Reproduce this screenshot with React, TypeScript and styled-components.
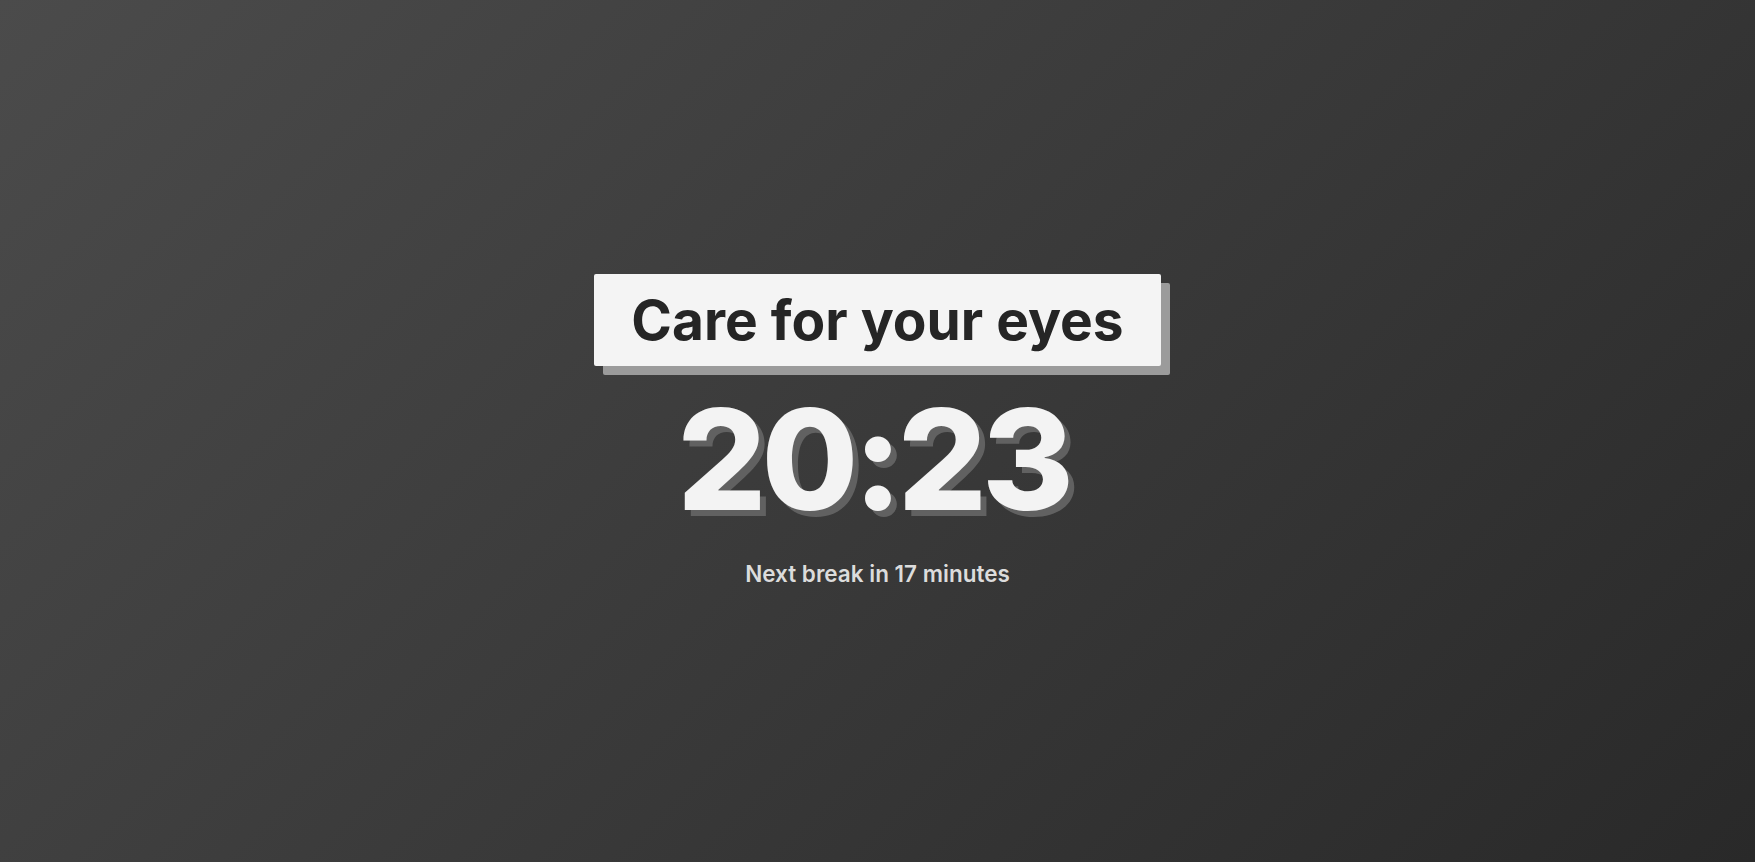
import styled, { createGlobalStyle } from "styled-components";

const GlobalStyle = createGlobalStyle`
  html, body {
    margin: 0;
    padding: 0;
  }
  body {
    font-family: Inter, "Liberation Sans", sans-serif;
  }
`;

const App = () => {
  return (
    <Screen>
      <GlobalStyle />
      <Center>
        <TitleCard>Care for your eyes</TitleCard>
        <Clock>20:23</Clock>
        <NextBreak>Next break in 17 minutes</NextBreak>
      </Center>
    </Screen>
  );
};

const Screen = styled.main`
  width: 100vw;
  height: 100vh;
  display: flex;
  justify-content: center;
  align-items: center;
  background: linear-gradient(135deg, #4b4b4b 0%, #3a3a3a 50%, #292929 100%);
  overflow: hidden;
`;

const Center = styled.section`
  display: flex;
  flex-direction: column;
  align-items: center;
  margin-top: -2px;
`;

const TitleCard = styled.h1`
  margin: 0;
  width: 567px;
  height: 92px;
  box-sizing: border-box;
  display: flex;
  justify-content: center;
  align-items: center;
  background: #f4f4f4;
  color: #252525;
  font-size: 55px;
  font-weight: 700;
  letter-spacing: 0;
  box-shadow: 9px 9px 0 #9b9b9b;
  border-radius: 2px;
`;

const Clock = styled.div`
  margin-top: 23px;
  padding-right: 9px;
  color: #f3f3f3;
  font-size: 140px;
  font-weight: 800;
  line-height: 1;
  letter-spacing: -5px;
  text-shadow: 6px 6px 0 #616161;
`;

const NextBreak = styled.p`
  margin: 31px 0 0;
  color: #dcdcdc;
  font-size: 22.5px;
  font-weight: 600;
`;

export default App;
